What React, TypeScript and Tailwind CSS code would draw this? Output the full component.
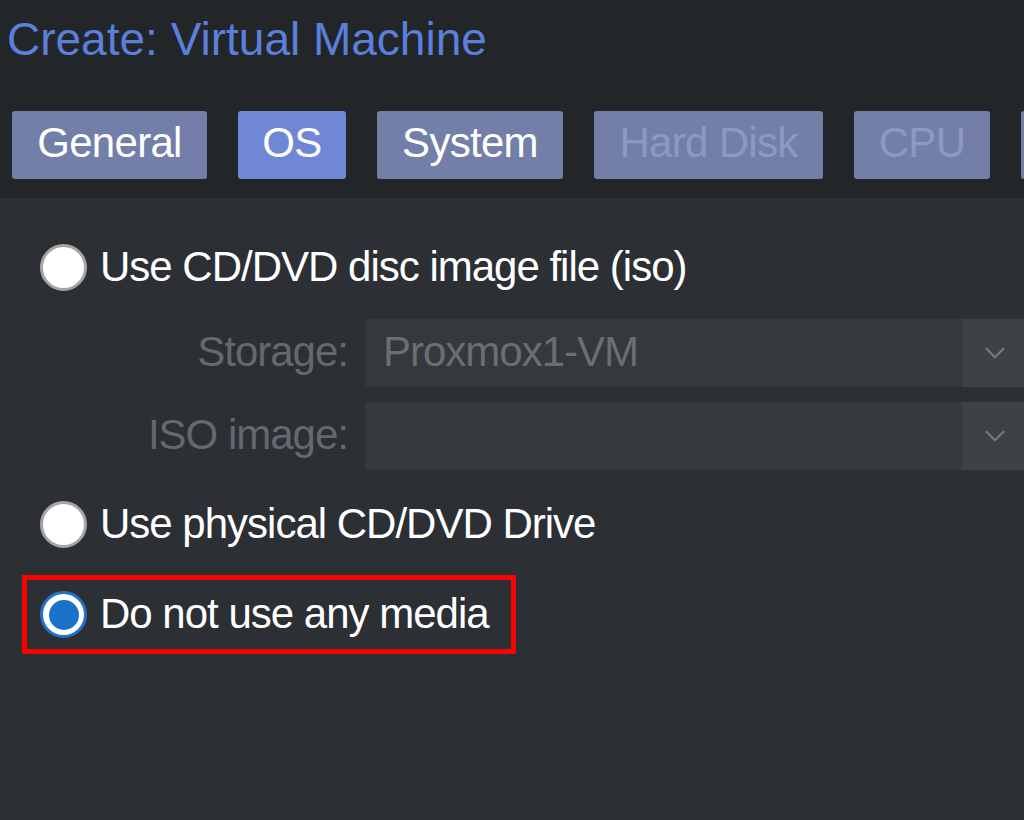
import { ChevronDown } from "lucide-react";

const TABS = [
  { label: "General", width: "w-[195px]", state: "normal" },
  { label: "OS", width: "w-[108px]", state: "active" },
  { label: "System", width: "w-[186px]", state: "normal" },
  { label: "Hard Disk", width: "w-[229px]", state: "disabled" },
  { label: "CPU", width: "w-[136px]", state: "disabled" },
  // next tab only shows as a sliver at the right edge
  { label: "", width: "w-[190px]", state: "disabled" },
];

function Tab({ label, width, state }: { label: string; width: string; state: string }) {
  const bg = state === "active" ? "bg-[#6f87d5]" : "bg-[#737fa8]";
  const text = state === "disabled" ? "text-[#8d99c4]" : "text-white";
  return (
    <div className={`shrink-0 h-[68px] ${width} ${bg} ${text} rounded-[3px] flex items-center justify-center pb-[4px] text-[42px] leading-none tracking-[-0.7px]`}>
      {label}
    </div>
  );
}

function Radio({ checked = false }: { checked?: boolean }) {
  if (checked) {
    return (
      <div className="shrink-0 w-[47px] h-[47px] rounded-full border-[3px] border-[#1f74c9] bg-white flex items-center justify-center">
        <div className="w-[30px] h-[30px] rounded-full bg-[#1a73c8]" />
      </div>
    );
  }
  return <div className="shrink-0 w-[47px] h-[47px] rounded-full bg-white border-[3px] border-[#a5a5a5]" />;
}

function ComboField({ label, value }: { label: string; value?: string }) {
  return (
    <div className="flex items-center">
      <div className="w-[348px] shrink-0 text-right text-[42px] leading-none tracking-[-1px] text-[#65686d] pb-[2px]">{label}</div>
      <div className="ml-[17px] shrink-0 w-[665px] h-[68px] flex bg-[#35383d]">
        <div className="flex-1 flex items-center pl-[18px] pb-[3px] text-[42px] leading-none tracking-[-1px] text-[#6b6e73]">{value}</div>
        <div className="w-[68px] h-full bg-[#3e4146] flex items-center justify-center pr-[2px]">
          <ChevronDown className="w-[34px] h-[34px] text-[#77797c]" strokeWidth={1.6} />
        </div>
      </div>
    </div>
  );
}

export default function App() {
  return (
    <div
      className="w-[1024px] h-[820px] overflow-hidden bg-[#2c2f34] flex flex-col"
      style={{ fontFamily: "'Liberation Sans', Arial, sans-serif" }}
    >
      {/* Window header */}
      <div className="h-[198px] shrink-0 bg-[#232629] flex flex-col">
        <h1 className="pl-[7px] pt-[16px] text-[46px] leading-none text-[#5b7fdc] whitespace-nowrap">Create: Virtual Machine</h1>
        <div className="mt-[49px] pl-[12px] flex gap-[31px]">
          {TABS.map((t, i) => (
            <Tab key={i} {...t} />
          ))}
        </div>
      </div>

      {/* OS panel */}
      <div className="flex flex-col">
        <div className="mt-[46px] pl-[40px] flex items-center gap-[13px]">
          <Radio />
          <span className="text-[42px] leading-none tracking-[-1px] text-white pb-[2px]">Use CD/DVD disc image file (iso)</span>
        </div>

        <div className="mt-[28px] flex flex-col gap-[15px]">
          <ComboField label="Storage:" value="Proxmox1-VM" />
          <ComboField label="ISO image:" />
        </div>

        <div className="mt-[31px] pl-[40px] flex items-center gap-[13px]">
          <Radio />
          <span className="text-[42px] leading-none tracking-[-1px] text-white pb-[2px]">Use physical CD/DVD Drive</span>
        </div>

        <div className="mt-[27px] ml-[22px] self-start border-[5px] border-[#ff0000] pl-[13px] pr-[22px] py-[11px] flex items-center gap-[13px]">
          <Radio checked />
          <span className="text-[42px] leading-none tracking-[-1px] text-white pb-[2px]">Do not use any media</span>
        </div>
      </div>
    </div>
  );
}
